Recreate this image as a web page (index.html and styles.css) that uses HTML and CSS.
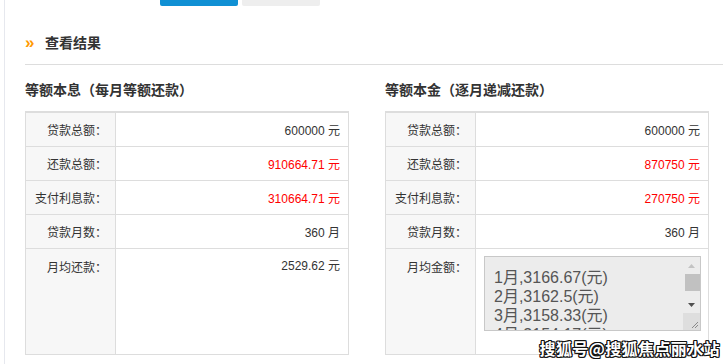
FILE: index.html
```html
<!DOCTYPE html>
<html lang="zh-CN">
<head>
    <meta charset="UTF-8">
    <title>房贷计算器 - 查看结果</title>
    <link rel="stylesheet" href="styles.css">
</head>
<body>
    <div class="page">
        <div class="tabs">
            <span class="tab tab-active"></span>
            <span class="tab"></span>
        </div>
        <div class="result-head">
            <span class="arrow">»</span>
            <span class="result-title">查看结果</span>
        </div>
        <div class="plans">
            <div class="plan">
                <h3>等额本息（每月等额还款）</h3>
                <table class="result-table">
                    <colgroup><col class="label-col"><col></colgroup>
                    <tr>
                        <th>贷款总额：</th>
                        <td>600000 元</td>
                    </tr>
                    <tr>
                        <th>还款总额：</th>
                        <td class="red">910664.71 元</td>
                    </tr>
                    <tr>
                        <th>支付利息款：</th>
                        <td class="red">310664.71 元</td>
                    </tr>
                    <tr>
                        <th>贷款月数：</th>
                        <td>360 月</td>
                    </tr>
                    <tr class="last-row">
                        <th>月均还款：</th>
                        <td>2529.62 元</td>
                    </tr>
                </table>
            </div>
            <div class="plan">
                <h3>等额本金（逐月递减还款）</h3>
                <table class="result-table">
                    <colgroup><col class="label-col"><col></colgroup>
                    <tr>
                        <th>贷款总额：</th>
                        <td>600000 元</td>
                    </tr>
                    <tr>
                        <th>还款总额：</th>
                        <td class="red">870750 元</td>
                    </tr>
                    <tr>
                        <th>支付利息款：</th>
                        <td class="red">270750 元</td>
                    </tr>
                    <tr>
                        <th>贷款月数：</th>
                        <td>360 月</td>
                    </tr>
                    <tr class="last-row">
                        <th>月均金额：</th>
                        <td>
                            <!-- read-only list with a classic scrollbar -->
                            <div class="monthly">
                                <div class="monthly-text">
                                    <div>1月,3166.67(元)</div>
                                    <div>2月,3162.5(元)</div>
                                    <div>3月,3158.33(元)</div>
                                    <div>4月,3154.17(元)</div>
                                    <div>5月,3150(元)</div>
                                </div>
                                <div class="scrollbar">
                                    <span class="scroll-btn">
                                        <svg width="7" height="4" viewBox="0 0 7 4"><path d="M0 4L3.5 0L7 4z" fill="#c3c3c3"/></svg>
                                    </span>
                                    <span class="scroll-thumb"></span>
                                    <span class="scroll-track"></span>
                                    <span class="scroll-btn">
                                        <svg width="7" height="4" viewBox="0 0 7 4"><path d="M0 0L3.5 4L7 0z" fill="#505050"/></svg>
                                    </span>
                                    <span class="resizer">
                                        <svg width="17" height="17" viewBox="0 0 17 17"><path d="M15 9L9 15M15 12L12 15" stroke="#8a8a8a" stroke-width="1"/></svg>
                                    </span>
                                </div>
                            </div>
                        </td>
                    </tr>
                </table>
            </div>
        </div>
        <div class="watermark">搜狐号@搜狐焦点丽水站</div>
    </div>
</body>
</html>
```

FILE: styles.css
```css
body {
    margin: 0;
    font-family: "Liberation Sans", "Noto Sans CJK SC", sans-serif;
    font-size: 12px;
    color: #333;
    background: #fff;
}
.page {
    position: relative;
    margin-left: 4px;
    border-left: 1px solid #e6e8ee;
    height: 364px;
    overflow: hidden;
}
.tabs {
    display: flex;
    gap: 4px;
    padding-left: 155px;
    height: 6px;
}
.tab {
    width: 78px;
    height: 6px;
    background: #eee;
    border-radius: 0 0 2px 2px;
}
.tab-active {
    background: #1090d4;
}
.result-head {
    display: flex;
    align-items: center;
    margin-left: 20px;
    padding: 27px 0 11px;
    height: 20px;
    border-bottom: 1px solid #ddd;
}
.arrow {
    width: 20px;
    color: #f90;
    font-size: 17px;
    font-weight: bold;
    line-height: 20px;
}
.result-title {
    font-size: 14px;
    font-weight: bold;
    line-height: 20px;
}
.plans {
    display: flex;
    gap: 36px;
    padding-left: 20px;
}
.plan {
    width: 324px;
}
.plan h3 {
    margin: 15px 0 11px;
    font-size: 14px;
    line-height: 20px;
    font-weight: bold;
}
.result-table {
    width: 324px;
    table-layout: fixed;
    border-collapse: collapse;
    border: 1px solid #ddd;
    border-top: 2px solid #ddd;
}
.label-col {
    width: 90px;
}
.result-table th,
.result-table td {
    height: 33px;
    padding: 0 8px;
    border: 1px solid #ddd;
    font-weight: normal;
    text-align: right;
    white-space: nowrap;
}
.result-table th {
    background: #f7f7f7;
    font-family: "Liberation Sans", "Noto Sans CJK TC", sans-serif;
}
.red {
    color: #f00;
}
.last-row th,
.last-row td {
    height: 106px;
    vertical-align: top;
    padding-top: 9px;
    box-sizing: border-box;
}
.last-row td {
    padding-top: 7px;
}
.monthly {
    display: flex;
    margin-left: auto;
    width: 217px;
    height: 75px;
    box-sizing: border-box;
    border: 1px solid #c8c8c8;
    background: #ececec;
    text-align: left;
}
.monthly-text {
    flex: 1;
    overflow: hidden;
    padding: 11px 0 0 9px;
    color: #555;
    font-size: 16px;
    line-height: 19px;
}
.scrollbar {
    display: flex;
    flex-direction: column;
    width: 17px;
}
.scroll-btn {
    display: flex;
    align-items: center;
    justify-content: center;
    height: 17px;
}
.scroll-thumb {
    height: 17px;
    margin: 0 0 0 2px;
    background: #c1c1c1;
}
.scroll-track {
    flex: 1;
}
.resizer {
    height: 17px;
    background: #dedede;
}
.resizer svg {
    display: block;
}
.watermark {
    position: absolute;
    right: 3px;
    bottom: 6px;
    color: #fff;
    font-family: "Noto Sans CJK SC", sans-serif;
    font-size: 16px;
    font-weight: bold;
    letter-spacing: 0.4px;
    line-height: 20px;
    text-shadow: 1px 1px 0 #111, -1px -1px 0 #111, 1px -1px 0 #111, -1px 1px 0 #111, 0 1px 0 #111, 1px 0 0 #111, 0 -1px 0 #111, -1px 0 0 #111;
}
```
